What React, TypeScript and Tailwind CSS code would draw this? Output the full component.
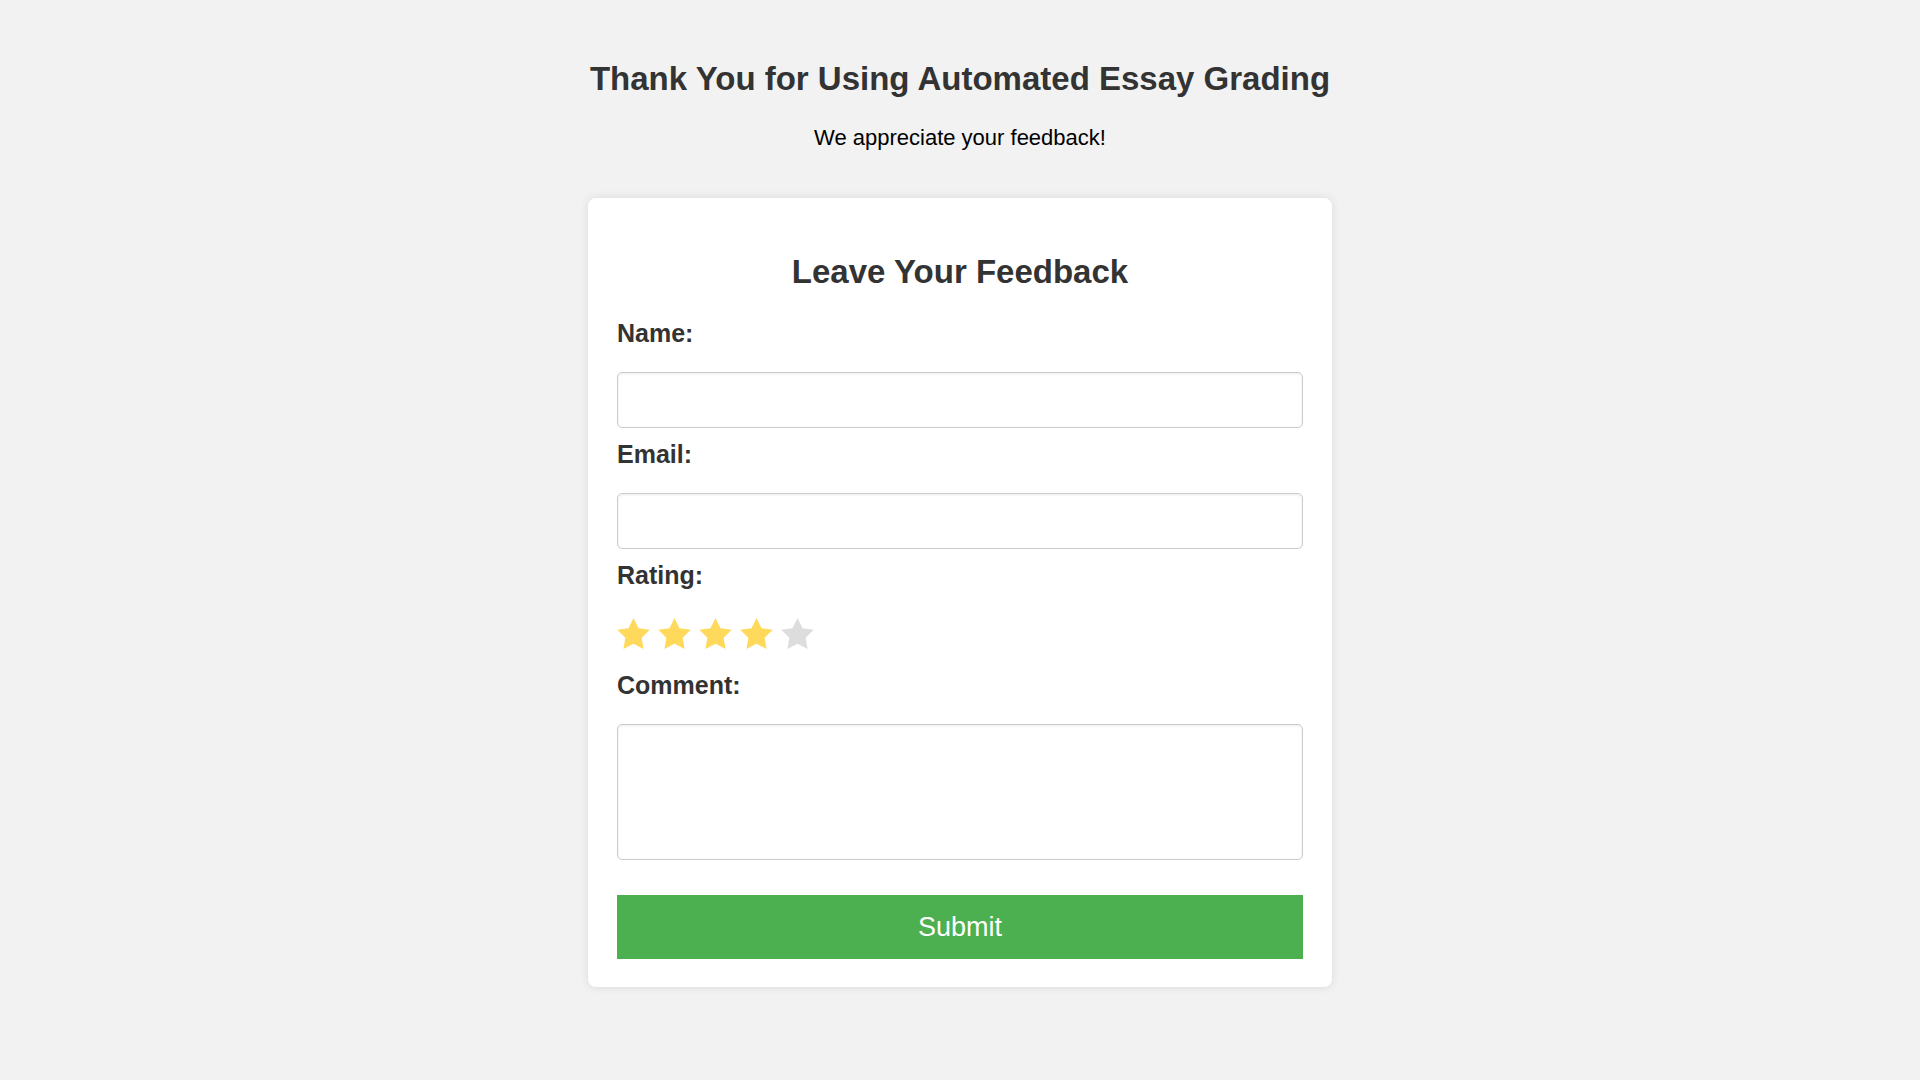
const Star = ({ on }: { on: boolean }) => (
  <svg width="33" height="31" viewBox="2 2 20 19.02" className={on ? "fill-[#ffd95c]" : "fill-[#dddddd]"}>
    <polygon points="12,2 15.09,8.26 22,9.27 17,14.14 18.18,21.02 12,17.77 5.82,21.02 7,14.14 2,9.27 8.91,8.26" />
  </svg>
)

export default function App() {
  const rating = 4
  return (
    <div className="min-h-screen bg-[#f2f2f2] font-['Liberation_Sans',Arial,sans-serif]">
      <div className="flex flex-col items-center pt-[60px] pb-[60px]">
        <h1 className="text-[33px] leading-[37px] font-bold text-[#333]">
          Thank You for Using Automated Essay Grading
        </h1>
        <p className="mt-[28px] text-[22px] leading-[25px] text-black">We appreciate your feedback!</p>

        <div className="mt-[48px] w-[744px] rounded-lg bg-white px-[29px] pt-[29px] pb-[28px] shadow-[0_0_10px_rgba(0,0,0,0.1)]">
          <h2 className="mt-[26px] text-center text-[33px] leading-[37px] font-bold text-[#333]">Leave Your Feedback</h2>

          <form className="mt-[29px] flex flex-col" onSubmit={(e) => e.preventDefault()}>
            <label className="block text-[25px] leading-[28px] font-bold text-[#333]">Name:</label>
            <input type="text" className="mt-[25px] h-[56px] w-full rounded-[5px] border border-[#ccc] px-3 text-[20px] shadow-[inset_0_1px_3px_rgba(0,0,0,0.08)] outline-none" />

            <label className="mt-[12px] block text-[25px] leading-[28px] font-bold text-[#333]">Email:</label>
            <input type="email" className="mt-[25px] h-[56px] w-full rounded-[5px] border border-[#ccc] px-3 text-[20px] shadow-[inset_0_1px_3px_rgba(0,0,0,0.08)] outline-none" />

            <label className="mt-[12px] block text-[25px] leading-[28px] font-bold text-[#333]">Rating:</label>
            <div className="mt-[29px] flex gap-[8px]">
              {[1, 2, 3, 4, 5].map((n) => (
                <Star key={n} on={n <= rating} />
              ))}
            </div>

            <label className="mt-[22px] block text-[25px] leading-[28px] font-bold text-[#333]">Comment:</label>
            <textarea className="mt-[25px] h-[136px] w-full resize-none rounded-[5px] border border-[#ccc] p-3 text-[20px] shadow-[inset_0_1px_3px_rgba(0,0,0,0.08)] outline-none" />

            <button type="submit" className="mt-[35px] h-[64px] w-full bg-[#4caf50] text-[27px] text-white">
              Submit
            </button>
          </form>
        </div>
      </div>
    </div>
  )
}
